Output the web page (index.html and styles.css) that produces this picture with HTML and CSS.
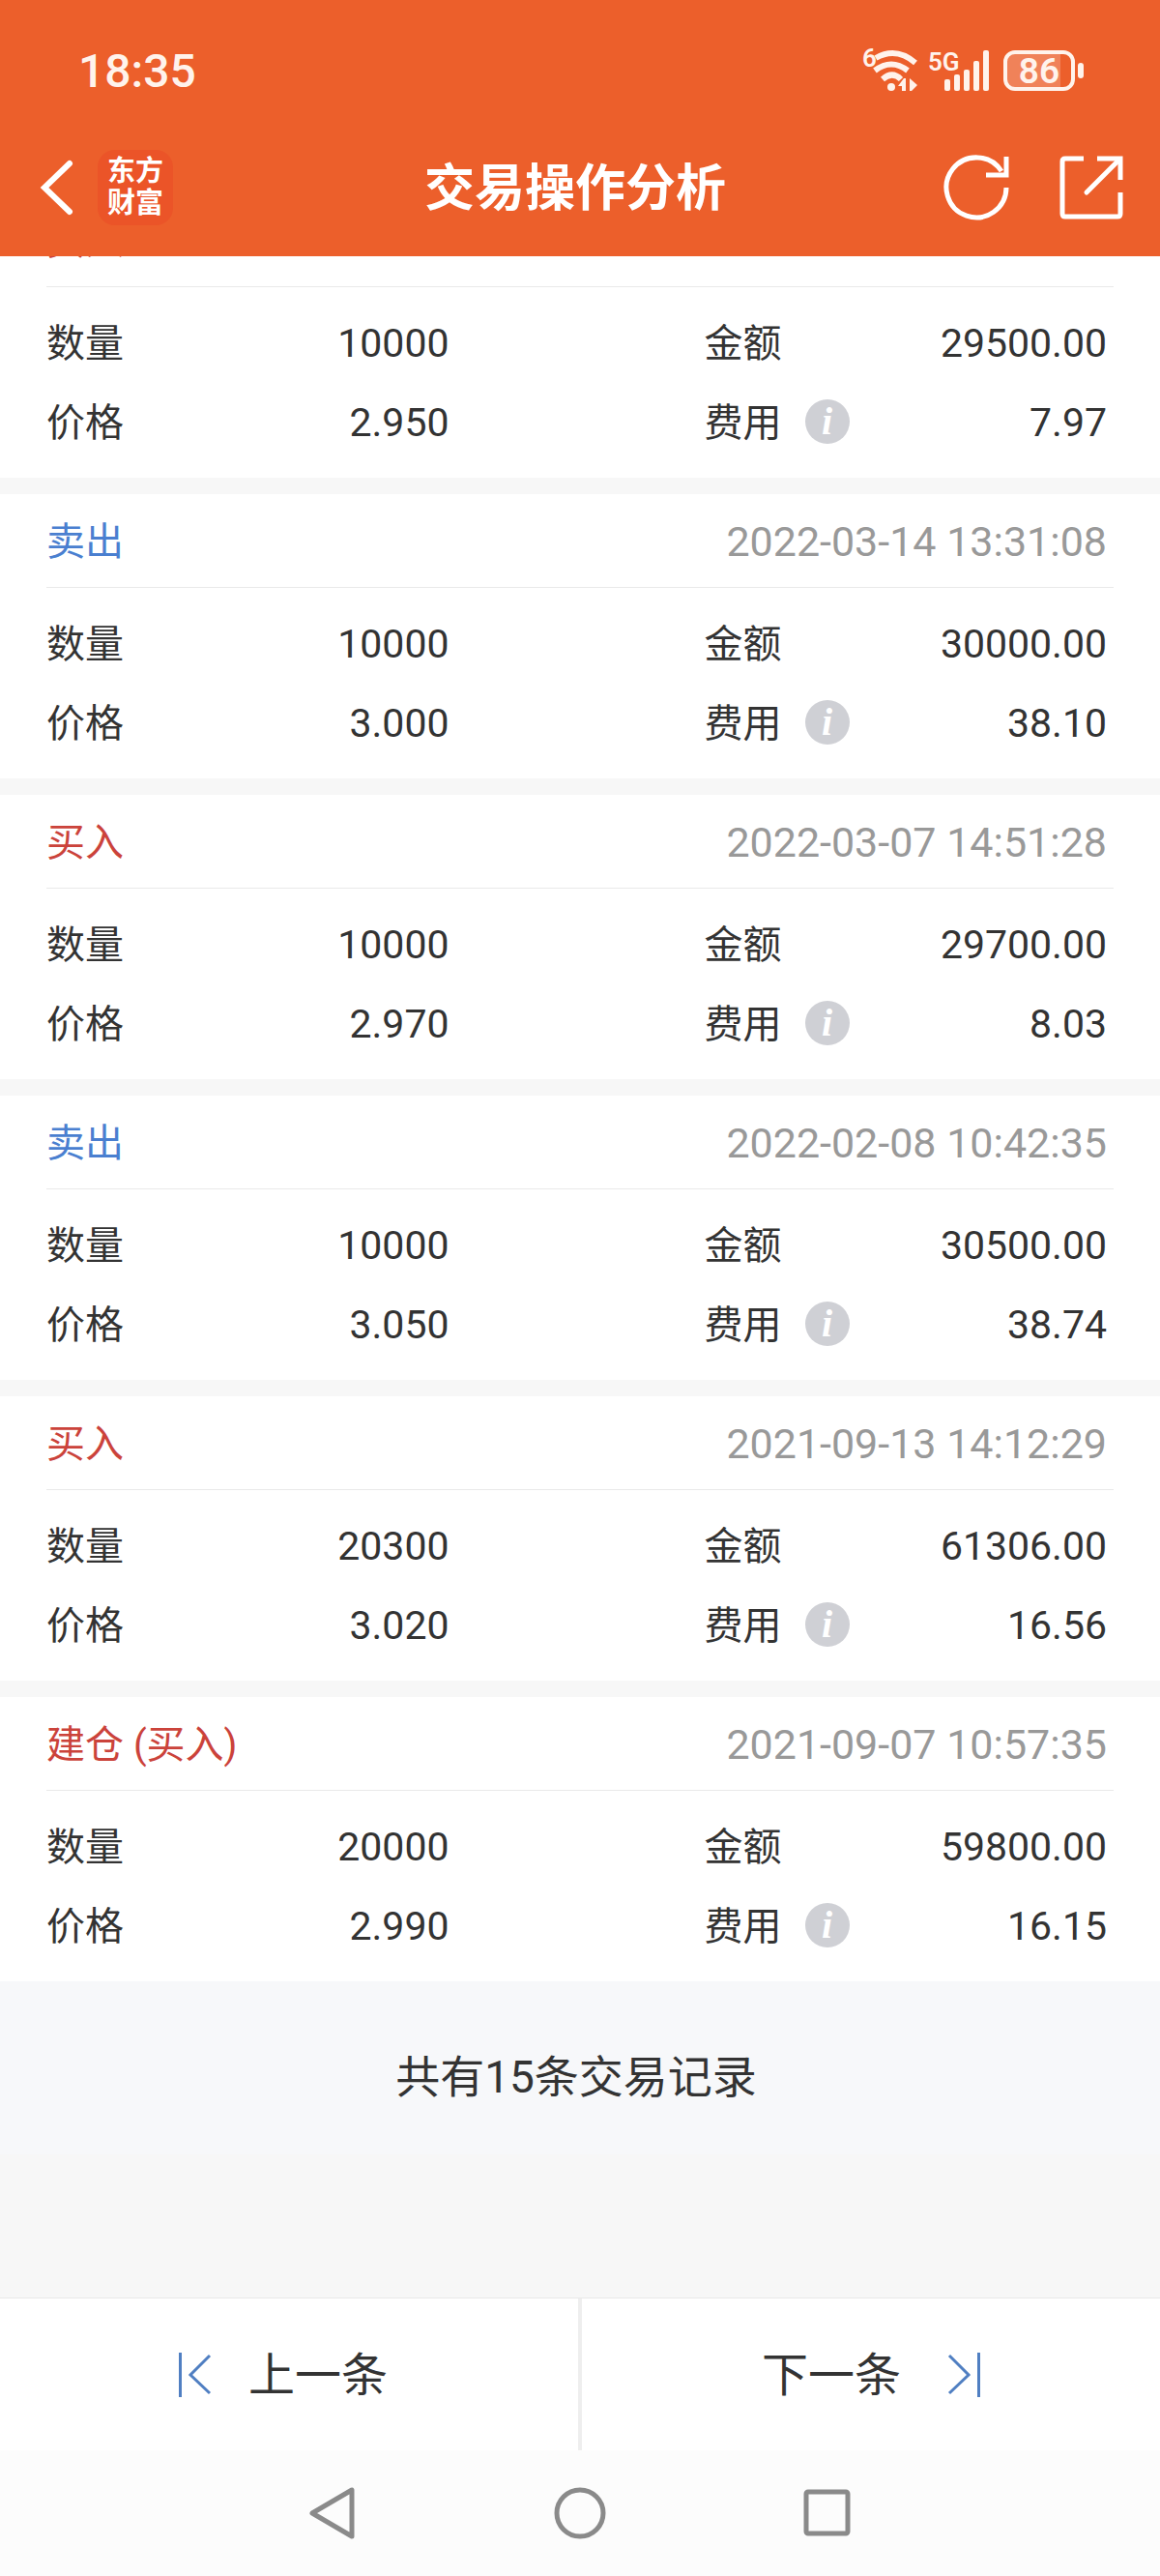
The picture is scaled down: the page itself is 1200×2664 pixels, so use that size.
FILE: index.html
```html
<!DOCTYPE html>
<html lang="zh-CN">
<head>
    <meta charset="UTF-8">
    <meta name="viewport" content="width=device-width, initial-scale=1.0">
    <title>交易操作分析</title>
    <link rel="stylesheet" href="styles.css">
</head>
<body>

    <header class="header">
        <div class="status-bar">
            <span class="clock">18:35</span>
            <div class="status-icons">
                <!-- Wi-Fi -->
                <svg width="60" height="50" viewBox="0 0 60 50" aria-hidden="true">
                    <text x="0" y="21" class="status-text" font-size="26">6</text>
                    <g fill="none" stroke="#fff3ec" stroke-width="6">
                        <path d="M14 12Q35 0 55 17"/>
                        <path d="M13 25Q30 12 47 25"/>
                        <path d="M21 34Q31 25 40 34"/>
                    </g>
                    <circle cx="30" cy="42" r="4" fill="#fff3ec"/>
                    <path d="M37 41l6-8h2v13h-4v-5zM49 33l8 7-6 6h-2z" fill="#fff3ec"/>
                </svg>
                <!-- 5G signal -->
                <svg width="64" height="50" viewBox="0 0 64 50" aria-hidden="true">
                    <text x="0" y="25" class="status-text" font-size="26">5G</text>
                    <g fill="#fff3ec">
                        <rect x="17" y="34" width="6" height="12" rx="2"/>
                        <rect x="27" y="29" width="6" height="17" rx="2"/>
                        <rect x="37" y="24" width="6" height="22" rx="2"/>
                        <rect x="47" y="15" width="6" height="31" rx="2"/>
                        <rect x="57" y="4" width="6" height="42" rx="2"/>
                    </g>
                </svg>
                <!-- Battery -->
                <svg width="86" height="50" viewBox="0 0 86 50" aria-hidden="true">
                    <path d="M11 6h48v38H11q-7 0-7-7V13q0-7 7-7z" fill="#fff" fill-opacity=".22"/>
                    <rect x="2" y="6" width="70" height="38" rx="10" fill="none" stroke="#fff3ec" stroke-width="4"/>
                    <rect x="77" y="17" width="6" height="16" rx="3" fill="#fff3ec"/>
                    <text x="37" y="38" class="status-text" font-size="37" text-anchor="middle">86</text>
                </svg>
            </div>
        </div>

        <div class="title-bar">
            <div class="title-left">
                <button class="icon-btn" aria-label="返回">
                    <svg width="60" height="68" viewBox="0 0 60 68">
                        <path d="M44 9L18 34L44 59" fill="none" stroke="#fff" stroke-width="6" stroke-linecap="round"/>
                    </svg>
                </button>
                <div class="logo"><span>东方</span><span>财富</span></div>
            </div>
            <h1>交易操作分析</h1>
            <div class="title-right">
                <button class="icon-btn" aria-label="刷新">
                    <svg width="70" height="68" viewBox="0 0 70 68">
                        <g fill="none" stroke="#fff" stroke-width="5">
                            <path d="M65 34A31 31 0 1 1 60 17"/>
                            <path d="M65 2V21H44"/>
                        </g>
                    </svg>
                </button>
                <button class="icon-btn" aria-label="分享">
                    <svg width="68" height="68" viewBox="0 0 68 68">
                        <g fill="none" stroke="#fff" stroke-width="5">
                            <path d="M27 4H8Q5 4 5 7V61Q5 64 8 64H62Q65 64 65 61V39"/>
                            <path d="M41 4H65V26"/>
                            <path d="M64 5L30 39" stroke-linecap="round"/>
                        </g>
                    </svg>
                </button>
            </div>
        </div>
    </header>

    <main class="records">
        <section class="card">
            <div class="card-head">
                <h2 class="buy">买入</h2>
            </div>
            <dl class="details">
                <div class="item"><dt>数量</dt><dd>10000</dd></div>
                <div class="item"><dt>金额</dt><dd>29500.00</dd></div>
                <div class="item"><dt>价格</dt><dd>2.950</dd></div>
                <div class="item"><dt>费用 <button class="info" aria-label="费用说明">i</button></dt><dd>7.97</dd></div>
            </dl>
        </section>

        <section class="card">
            <div class="card-head">
                <h2 class="sell">卖出</h2>
                <time>2022-03-14 13:31:08</time>
            </div>
            <dl class="details">
                <div class="item"><dt>数量</dt><dd>10000</dd></div>
                <div class="item"><dt>金额</dt><dd>30000.00</dd></div>
                <div class="item"><dt>价格</dt><dd>3.000</dd></div>
                <div class="item"><dt>费用 <button class="info" aria-label="费用说明">i</button></dt><dd>38.10</dd></div>
            </dl>
        </section>

        <section class="card">
            <div class="card-head">
                <h2 class="buy">买入</h2>
                <time>2022-03-07 14:51:28</time>
            </div>
            <dl class="details">
                <div class="item"><dt>数量</dt><dd>10000</dd></div>
                <div class="item"><dt>金额</dt><dd>29700.00</dd></div>
                <div class="item"><dt>价格</dt><dd>2.970</dd></div>
                <div class="item"><dt>费用 <button class="info" aria-label="费用说明">i</button></dt><dd>8.03</dd></div>
            </dl>
        </section>

        <section class="card">
            <div class="card-head">
                <h2 class="sell">卖出</h2>
                <time>2022-02-08 10:42:35</time>
            </div>
            <dl class="details">
                <div class="item"><dt>数量</dt><dd>10000</dd></div>
                <div class="item"><dt>金额</dt><dd>30500.00</dd></div>
                <div class="item"><dt>价格</dt><dd>3.050</dd></div>
                <div class="item"><dt>费用 <button class="info" aria-label="费用说明">i</button></dt><dd>38.74</dd></div>
            </dl>
        </section>

        <section class="card">
            <div class="card-head">
                <h2 class="buy">买入</h2>
                <time>2021-09-13 14:12:29</time>
            </div>
            <dl class="details">
                <div class="item"><dt>数量</dt><dd>20300</dd></div>
                <div class="item"><dt>金额</dt><dd>61306.00</dd></div>
                <div class="item"><dt>价格</dt><dd>3.020</dd></div>
                <div class="item"><dt>费用 <button class="info" aria-label="费用说明">i</button></dt><dd>16.56</dd></div>
            </dl>
        </section>

        <section class="card">
            <div class="card-head">
                <h2 class="buy">建仓 (买入)</h2>
                <time>2021-09-07 10:57:35</time>
            </div>
            <dl class="details">
                <div class="item"><dt>数量</dt><dd>20000</dd></div>
                <div class="item"><dt>金额</dt><dd>59800.00</dd></div>
                <div class="item"><dt>价格</dt><dd>2.990</dd></div>
                <div class="item"><dt>费用 <button class="info" aria-label="费用说明">i</button></dt><dd>16.15</dd></div>
            </dl>
        </section>

        <p class="summary">共有15条交易记录</p>
    </main>

    <footer class="footer">
        <div class="pager">
            <button class="prev">
                <svg width="34" height="48" viewBox="0 0 34 48" aria-hidden="true">
                    <path d="M1.5 1V47M32 4L12 24L32 43" fill="none" stroke="#507fc2" stroke-width="3"/>
                </svg>
                <span>上一条</span>
            </button>
            <button class="next">
                <span>下一条</span>
                <svg width="34" height="48" viewBox="0 0 34 48" aria-hidden="true">
                    <path d="M32.5 1V47M2 4L22 24L2 43" fill="none" stroke="#507fc2" stroke-width="3"/>
                </svg>
            </button>
        </div>
        <!-- System navigation -->
        <nav class="system-nav">
            <button class="icon-btn" aria-label="后退">
                <svg width="56" height="56" viewBox="0 0 56 56">
                    <path d="M48 4V52L7 28Z" fill="none" stroke="#8a8a8a" stroke-width="5" stroke-linejoin="round"/>
                </svg>
            </button>
            <button class="icon-btn" aria-label="主屏幕">
                <svg width="56" height="56" viewBox="0 0 56 56">
                    <circle cx="28" cy="28" r="24" fill="none" stroke="#8a8a8a" stroke-width="5"/>
                </svg>
            </button>
            <button class="icon-btn" aria-label="最近任务">
                <svg width="56" height="56" viewBox="0 0 56 56">
                    <rect x="6" y="6" width="43" height="43" rx="2" fill="none" stroke="#8a8a8a" stroke-width="5"/>
                </svg>
            </button>
        </nav>
    </footer>

</body>
</html>
```
FILE: styles.css
```css
* {
    margin: 0;
    padding: 0;
    box-sizing: border-box;
}

body {
    font-family: Roboto, "Noto Sans CJK SC", sans-serif;
    font-size: 40px;
    line-height: 60px;
    color: #333;
    background-color: #f7f7f7;
    display: flex;
    flex-direction: column;
    min-height: 100vh;
}

button {
    font: inherit;
    color: inherit;
    background: none;
    border: none;
    cursor: pointer;
}

svg {
    display: block;
}

/* Header */
.header {
    position: sticky;
    top: 0;
    z-index: 1;
    padding-top: 24px;
    background-color: #ec5f2b;
    color: #fff;
}

.status-bar {
    display: flex;
    justify-content: space-between;
    align-items: center;
    height: 98px;
    padding: 0 76px 0 81px;
}

.clock {
    padding-top: 2px;
    font-size: 48px;
    font-weight: 500;
    color: #fff3ec;
}

.status-icons {
    display: flex;
    gap: 8px;
}

.status-icons svg:last-child {
    margin-left: 6px;
}

.status-text {
    fill: #fff3ec;
    font-weight: 600;
}

.title-bar {
    display: grid;
    grid-template-columns: 1fr auto 1fr;
    align-items: center;
    height: 143px;
    padding: 0 38px 0 28px;
}

.title-left, .title-right {
    display: flex;
    align-items: center;
}

.title-left {
    gap: 13px;
}

.title-right {
    justify-content: flex-end;
    gap: 48px;
}

h1 {
    padding-top: 4px;
    font-size: 52px;
    font-weight: 700;
}

.logo {
    display: flex;
    flex-direction: column;
    justify-content: center;
    align-items: center;
    width: 78px;
    height: 78px;
    border-radius: 18px;
    background-color: #eb5428;
    font-size: 29px;
    font-weight: 700;
    line-height: 33px;
}

/* Records, the first card is partly scrolled under the header */
.records {
    flex: 1;
    margin-top: -65px;
}

.card {
    padding: 0 48px;
    background-color: #fff;
    border-bottom: 17px solid #f7f7f7;
}

.card:last-of-type {
    border-bottom: none;
}

.card-head {
    display: flex;
    justify-content: space-between;
    align-items: center;
    height: 97px;
    padding-right: 7px;
    border-bottom: 1px solid #e9e9e9;
}

h2 {
    padding-top: 4px;
    font-size: 40px;
    font-weight: 400;
}

.buy {
    color: #cb433b;
}

.sell {
    color: #4a7fd0;
}

time {
    padding-top: 2px;
    font-size: 43px;
    color: #999;
}

.details {
    display: grid;
    grid-template-columns: 1fr 1fr;
    column-gap: 22vw;
    padding: 17px 7px 16px 0;
}

.item {
    display: flex;
    justify-content: space-between;
    align-items: center;
    height: 82px;
}

dt {
    display: flex;
    align-items: center;
    gap: 24px;
    padding-top: 2px;
}

dd {
    font-size: 41px;
}

.info {
    width: 46px;
    height: 46px;
    margin-bottom: 4px;
    border-radius: 50%;
    background-color: #cfd0d5;
    color: #fff;
    font: italic bold 40px/44px "Liberation Serif", serif;
}

.summary {
    padding: 69px 8px 50px 0;
    background-color: #f7f8fa;
    font-size: 46px;
    text-align: center;
}

/* Footer */
.pager {
    display: grid;
    grid-template-columns: 1fr 1fr;
    height: 158px;
    border-top: 1px solid #e9e9e9;
    background-color: #fff;
}

.pager button {
    display: flex;
    justify-content: center;
    align-items: center;
    font-size: 48px;
}

.pager span {
    padding-top: 2px;
}

.pager .prev {
    gap: 38px;
    padding-right: 12px;
    border-right: 2px solid #eee;
}

.pager .next {
    gap: 48px;
    border-left: 2px solid #eee;
}

.system-nav {
    display: grid;
    grid-template-columns: repeat(3, 1fr);
    justify-items: center;
    align-items: center;
    height: 130px;
    padding: 0 18%;
    background-color: #fcfcfc;
}
```
